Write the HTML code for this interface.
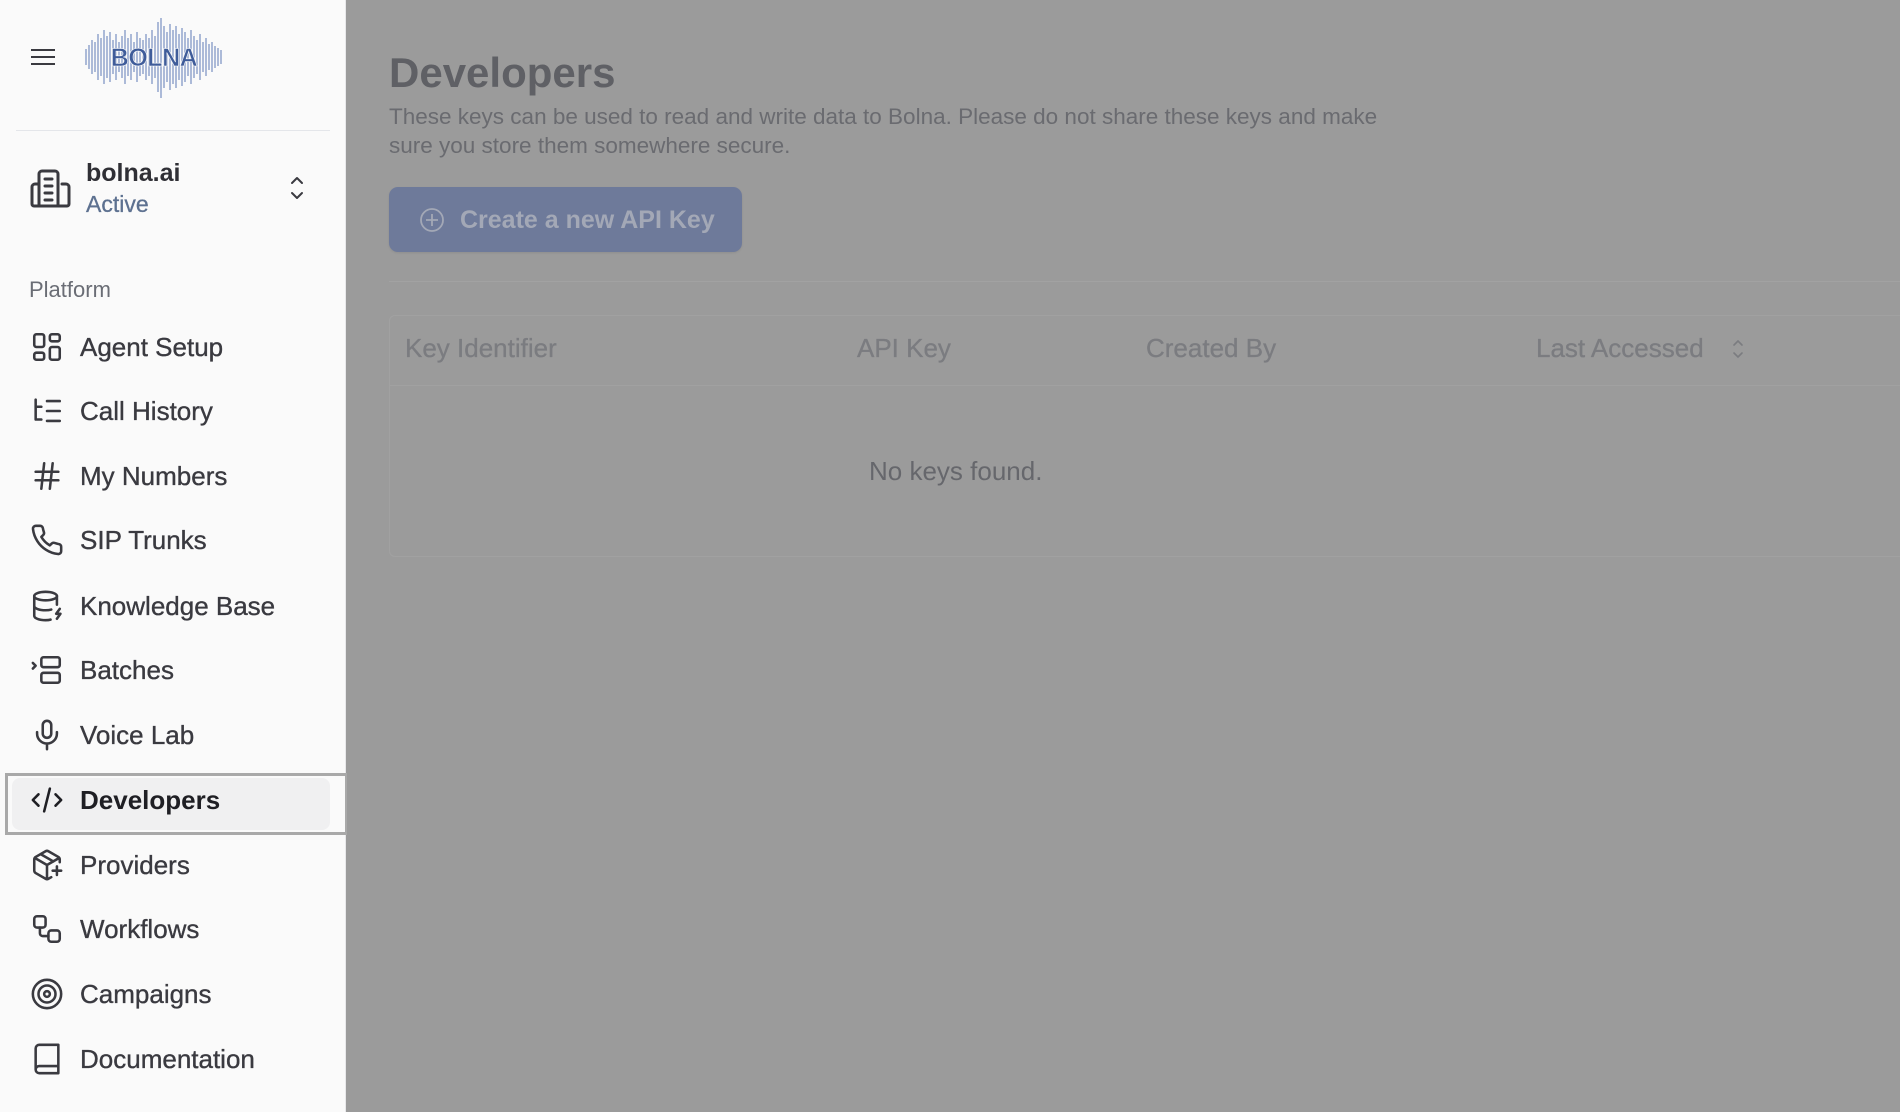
<!DOCTYPE html>
<html><head><meta charset="utf-8"><style>
*{margin:0;padding:0;box-sizing:border-box}
body{width:1900px;height:1112px;overflow:hidden;background:#9b9b9b;font-family:"Liberation Sans",sans-serif;position:relative}
.sb{position:absolute;left:0;top:0;width:346px;height:1112px;background:#fafafa;border-right:1px solid #e8e8ea}
.abs{position:absolute}
.nav{position:absolute;left:30px;display:flex;align-items:center;height:40px;font-size:26px;color:#3a3a40;-webkit-text-stroke:0.35px #3a3a40}
.nav svg{width:34px;height:34px;margin-right:16px;fill:none;stroke:#3a3a40;stroke-width:1.8;stroke-linecap:round;stroke-linejoin:round}
.main{position:absolute;left:347px;top:0;right:0;bottom:0;background:#9b9b9b}
.th{position:absolute;top:333px;font-size:26px;color:#7b7c80;-webkit-text-stroke:0.3px #7b7c80}
</style></head><body>
<div class="sb">
  <svg class="abs" style="left:30px;top:47px" width="26" height="20" viewBox="0 0 26 20"><path d="M1 3H25M1 10H25M1 17H25" stroke="#3a3a40" stroke-width="2"/></svg>
  <svg class="abs" style="left:84px;top:12px" width="142" height="90" viewBox="0 0 142 90">
    <g stroke="#8297c5" stroke-width="1.3">
      <line x1="2" y1="37" x2="2" y2="53"/><line x1="5" y1="33" x2="5" y2="57"/><line x1="8" y1="28" x2="8" y2="62"/><line x1="11" y1="30" x2="11" y2="60"/><line x1="14" y1="22" x2="14" y2="68"/><line x1="17" y1="26" x2="17" y2="64"/><line x1="20" y1="18" x2="20" y2="72"/><line x1="23" y1="24" x2="23" y2="66"/><line x1="26" y1="20" x2="26" y2="70"/><line x1="29" y1="28" x2="29" y2="62"/><line x1="32" y1="22" x2="32" y2="68"/><line x1="35" y1="30" x2="35" y2="60"/><line x1="38" y1="24" x2="38" y2="66"/><line x1="41" y1="18" x2="41" y2="72"/><line x1="44" y1="26" x2="44" y2="64"/><line x1="47" y1="22" x2="47" y2="68"/><line x1="50" y1="30" x2="50" y2="60"/><line x1="53" y1="20" x2="53" y2="70"/><line x1="56" y1="26" x2="56" y2="64"/><line x1="59" y1="28" x2="59" y2="62"/><line x1="62" y1="22" x2="62" y2="68"/><line x1="65" y1="26" x2="65" y2="64"/><line x1="68" y1="18" x2="68" y2="72"/><line x1="71" y1="24" x2="71" y2="66"/><line x1="74" y1="10" x2="74" y2="80"/><line x1="77" y1="6" x2="77" y2="86"/><line x1="80" y1="14" x2="80" y2="76"/><line x1="83" y1="20" x2="83" y2="70"/><line x1="86" y1="12" x2="86" y2="78"/><line x1="89" y1="18" x2="89" y2="72"/><line x1="92" y1="14" x2="92" y2="76"/><line x1="95" y1="22" x2="95" y2="68"/><line x1="98" y1="16" x2="98" y2="74"/><line x1="101" y1="20" x2="101" y2="70"/><line x1="104" y1="26" x2="104" y2="64"/><line x1="107" y1="18" x2="107" y2="72"/><line x1="110" y1="24" x2="110" y2="66"/><line x1="113" y1="28" x2="113" y2="62"/><line x1="116" y1="22" x2="116" y2="68"/><line x1="119" y1="30" x2="119" y2="60"/><line x1="122" y1="26" x2="122" y2="64"/><line x1="125" y1="32" x2="125" y2="58"/><line x1="128" y1="30" x2="128" y2="60"/><line x1="131" y1="34" x2="131" y2="56"/><line x1="134" y1="36" x2="134" y2="54"/><line x1="137" y1="38" x2="137" y2="52"/>
    </g>
    <text x="70" y="54" text-anchor="middle" font-family="Liberation Sans" font-weight="bold" font-size="25" fill="#3f5c9a" stroke="#fafafa" stroke-width="0.6" letter-spacing="-0.5">BOLNA</text>
  </svg>
  <div class="abs" style="left:16px;top:130px;width:314px;height:1px;background:#e4e6ea"></div>
  <svg class="abs" style="left:30px;top:168px" width="42" height="42" viewBox="0 0 42 42" fill="none" stroke="#3a3a40" stroke-width="3" stroke-linejoin="round" stroke-linecap="round"><path d="M9 38V6a3 3 0 0 1 3-3h13a3 3 0 0 1 3 3v32"/><path d="M9 16H5a3 3 0 0 0-3 3v17a2 2 0 0 0 2 2h33a2 2 0 0 0 2-2V19a3 3 0 0 0-3-3h-4"/><path d="M15 11h7M15 18h7M15 25h7M15 32h7"/></svg>
  <div class="abs" style="left:86px;top:159px;font-size:25px;font-weight:bold;color:#2f2f35">bolna.ai</div>
  <div class="abs" style="left:86px;top:191px;font-size:23px;color:#5d7190;-webkit-text-stroke:0.3px #5d7190">Active</div>
  <svg class="abs" style="left:289px;top:175px" width="16" height="26" viewBox="0 0 16 26" fill="none" stroke="#3a3a40" stroke-width="2" stroke-linecap="round" stroke-linejoin="round"><path d="M3 8l5-5 5 5M3 18l5 5 5-5"/></svg>
  <div class="abs" style="left:29px;top:277px;font-size:22px;color:#6a6d75">Platform</div>

  <div class="abs" style="left:5px;top:773px;width:343px;height:62px;border:3px solid #a9a9a9"></div>
  <div class="abs" style="left:12px;top:778px;width:318px;height:52px;background:#f0f0f1;border-radius:8px"></div>

  <div class="nav" style="top:327px"><svg viewBox="0 0 24 24"><rect x="3" y="3" width="7" height="9" rx="1.5"/><rect x="14" y="3" width="7" height="5" rx="1.5"/><rect x="14" y="12" width="7" height="9" rx="1.5"/><rect x="3" y="16" width="7" height="5" rx="1.5"/></svg>Agent Setup</div>
  <div class="nav" style="top:391px"><svg viewBox="0 0 24 24"><path d="M4 4v14h4M4 9h4M12 5h9M12 12h9M12 19h9"/></svg>Call History</div>
  <div class="nav" style="top:456px"><svg viewBox="0 0 24 24"><path d="M4 9h16M4 15h16M10 3L8 21M16 3l-2 18"/></svg>My Numbers</div>
  <div class="nav" style="top:520px"><svg viewBox="0 0 24 24"><path d="M22 16.9v3a2 2 0 0 1-2.2 2 19.8 19.8 0 0 1-8.6-3.1 19.5 19.5 0 0 1-6-6A19.8 19.8 0 0 1 2.1 4.2 2 2 0 0 1 4.1 2h3a2 2 0 0 1 2 1.700c.1.9.4 1.8.7 2.7a2 2 0 0 1-.5 2.1L8 9.8a16 16 0 0 0 6 6l1.3-1.3a2 2 0 0 1 2.1-.4c.9.3 1.8.6 2.7.7A2 2 0 0 1 22 16.9z"/></svg>SIP Trunks</div>
  <div class="nav" style="top:586px"><svg viewBox="0 0 24 24"><ellipse cx="11" cy="5" rx="8" ry="3"/><path d="M3 5v14c0 1.7 3.6 3 8 3 1.5 0 2.5-.1 3.5-.4M3 12c0 1.7 3.6 3 8 3 1.5 0 3-.2 4-.5M19 5v6M21 14l-2.5 3.5h3L19 21"/></svg>Knowledge Base</div>
  <div class="nav" style="top:650px"><svg viewBox="0 0 24 24"><path d="M2 7l2 2-2 2"/><rect x="8" y="3" width="13" height="7" rx="1.5"/><rect x="8" y="14" width="13" height="7" rx="1.5"/></svg>Batches</div>
  <div class="nav" style="top:715px"><svg viewBox="0 0 24 24"><rect x="9" y="2" width="6" height="12" rx="3"/><path d="M5 10v1a7 7 0 0 0 14 0v-1M12 18v4"/></svg>Voice Lab</div>
  <div class="nav" style="top:780px;font-weight:bold;color:#1f1f24;-webkit-text-stroke:0"><svg viewBox="0 0 24 24" style="stroke:#1f1f24"><path d="M6 8l-4 4 4 4M18 8l4 4-4 4M14 4l-4 16"/></svg>Developers</div>
  <div class="nav" style="top:845px"><svg viewBox="0 0 24 24"><path d="M16 16h6M19 13v6M21 10V8a2 2 0 0 0-1-1.7l-7-4a2 2 0 0 0-2 0l-7 4A2 2 0 0 0 3 8v8a2 2 0 0 0 1 1.7l7 4a2 2 0 0 0 2 0l2-1.1M7.5 4.3l9 5.2M3.3 7L12 12l8.7-5M12 22V12"/></svg>Providers</div>
  <div class="nav" style="top:909px"><svg viewBox="0 0 24 24"><rect x="3" y="3" width="8" height="8" rx="2"/><path d="M7 11v4a2 2 0 0 0 2 2h4"/><rect x="13" y="13" width="8" height="8" rx="2"/></svg>Workflows</div>
  <div class="nav" style="top:974px"><svg viewBox="0 0 24 24"><circle cx="12" cy="12" r="10"/><circle cx="12" cy="12" r="6"/><circle cx="12" cy="12" r="2"/></svg>Campaigns</div>
  <div class="nav" style="top:1039px"><svg viewBox="0 0 24 24"><path d="M4 19.5v-15A2.5 2.5 0 0 1 6.5 2H20v20H6.5a2.5 2.5 0 0 1 0-5H20"/></svg>Documentation</div>
</div>

<div class="main">
  <div class="abs" style="left:42px;top:49px;font-size:42px;font-weight:bold;color:#5f6065">Developers</div>
  <div class="abs" style="left:42px;top:102px;font-size:22.5px;line-height:29px;color:#6a6b70;white-space:nowrap">These keys can be used to read and write data to Bolna. Please do not share these keys and make<br>sure you store them somewhere secure.</div>
  <div class="abs" style="left:42px;top:187px;width:353px;height:65px;background:#6e7a9a;border-radius:9px;box-shadow:0 1px 2px rgba(0,0,0,.08)"></div>
  <svg class="abs" style="left:72px;top:207px" width="26" height="26" viewBox="0 0 26 26" fill="none" stroke="#a3a8b6" stroke-width="1.8"><circle cx="13" cy="13" r="11"/><path d="M13 7v12M7 13h12"/></svg>
  <div class="abs" style="left:113px;top:206px;font-size:25px;font-weight:bold;color:#a3a8b6">Create a new API Key</div>
  <div class="abs" style="left:42px;top:281px;right:0;height:1px;background:#a2a2a2"></div>
  <div class="abs" style="left:42px;top:315px;right:-2px;height:242px;border:1px solid #a1a1a1;border-radius:6px 0 0 6px"></div>
  <div class="abs" style="left:42px;top:385px;right:0;height:1px;background:#a1a1a1"></div>
  <div class="th" style="left:58px">Key Identifier</div>
  <div class="th" style="left:510px">API Key</div>
  <div class="th" style="left:799px">Created By</div>
  <div class="th" style="left:1189px">Last Accessed</div>
  <svg class="abs" style="left:1384px;top:338px" width="14" height="22" viewBox="0 0 14 22" fill="none" stroke="#7b7c80" stroke-width="1.6" stroke-linecap="round"><path d="M3 7l4-4 4 4M3 15l4 4 4-4"/></svg>
  <div class="abs" style="left:522px;top:456px;font-size:26px;color:#66676c">No keys found.</div>
</div>
</body></html>
